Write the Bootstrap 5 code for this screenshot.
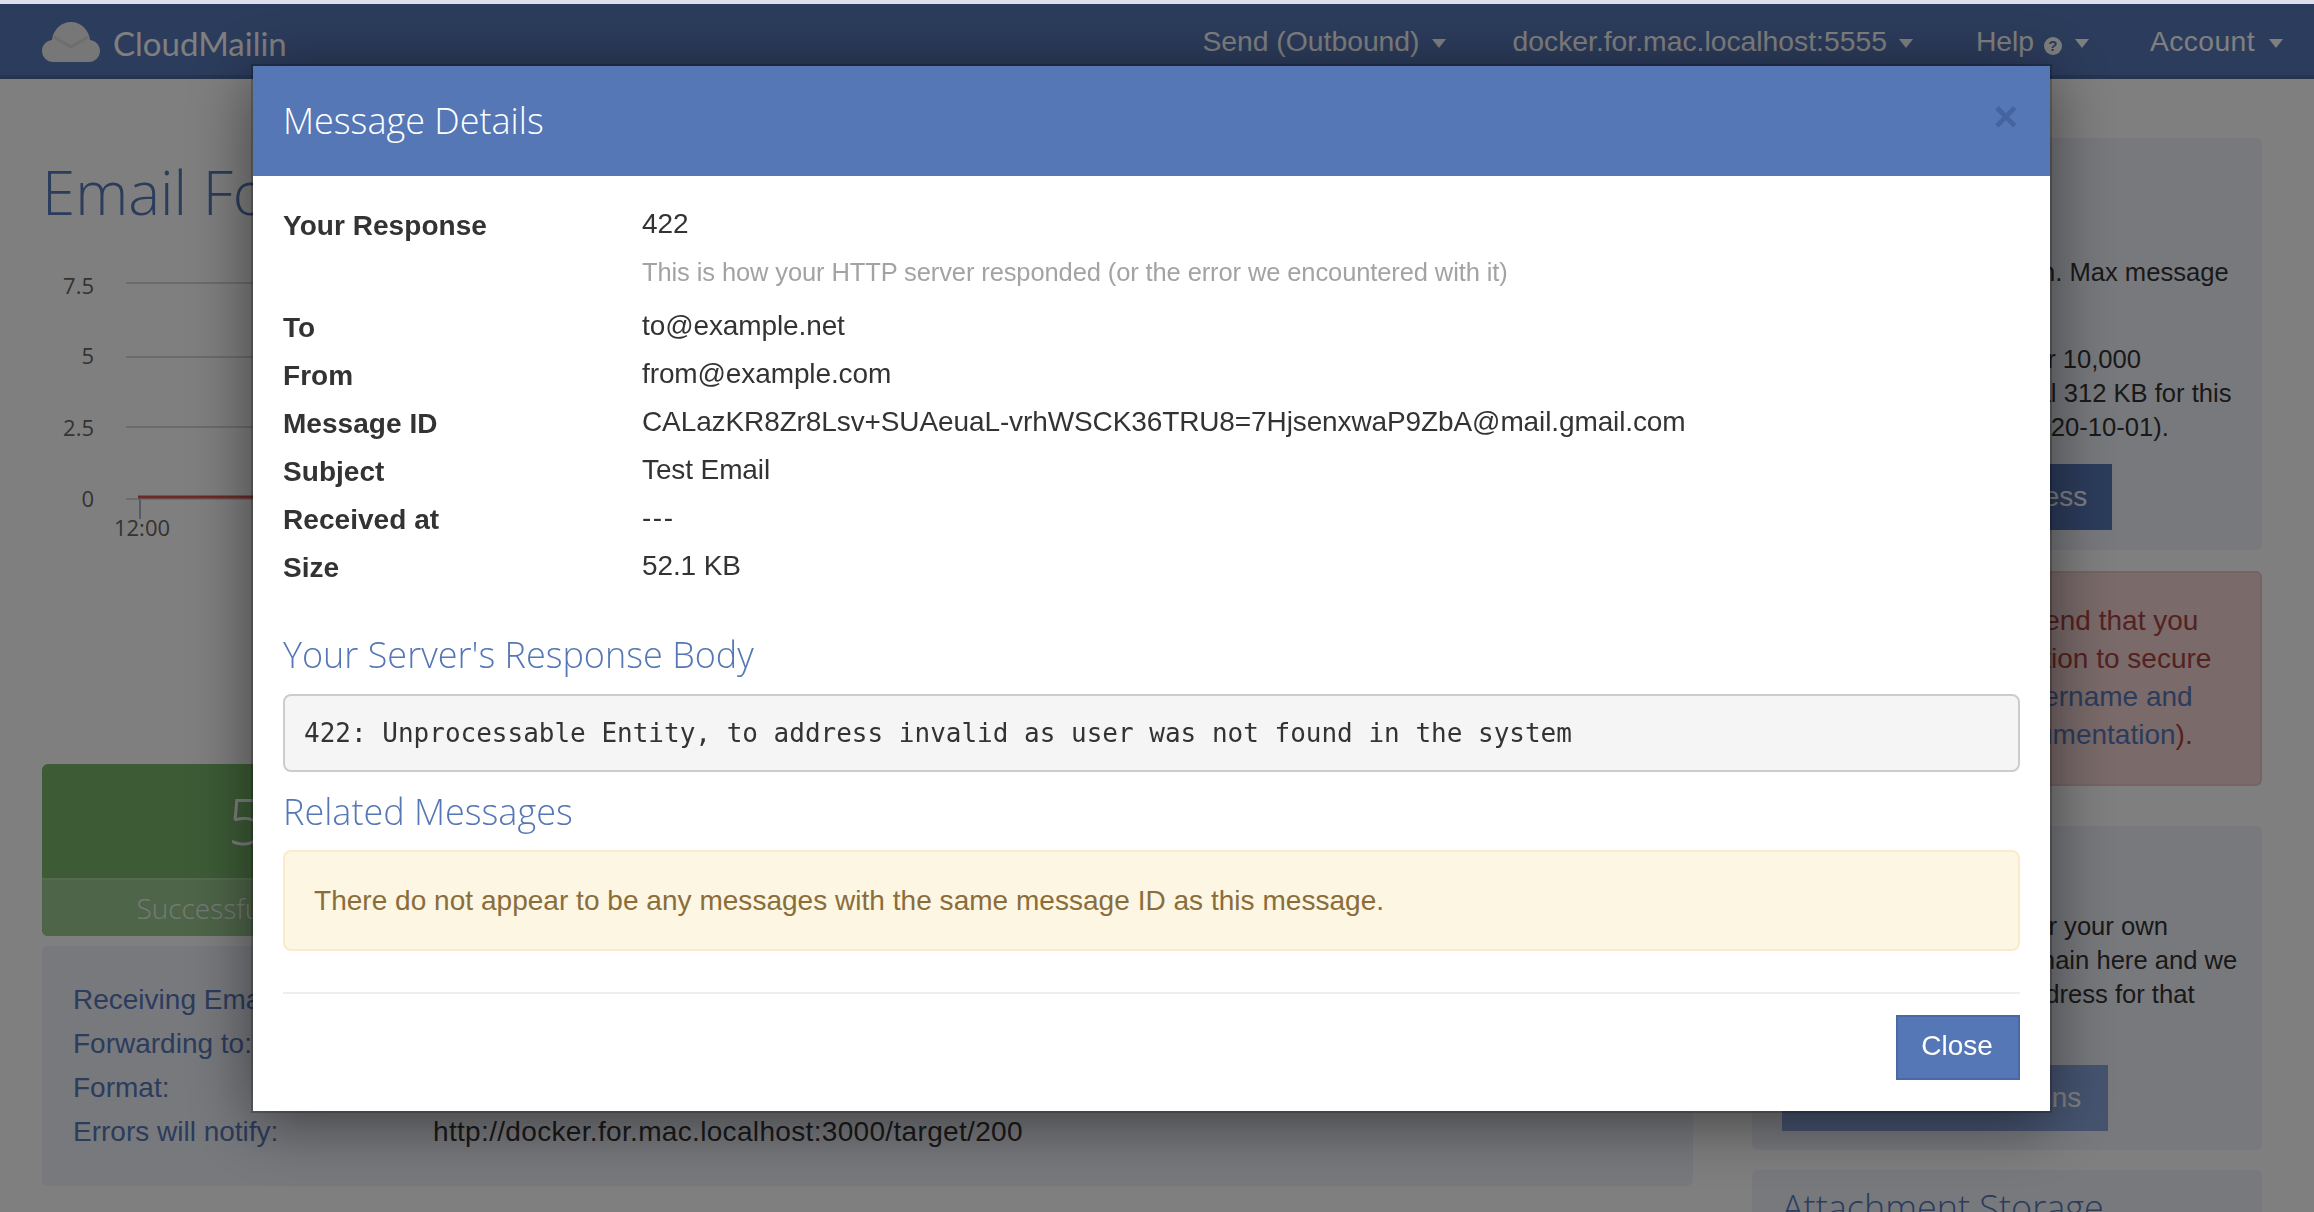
<!DOCTYPE html>
<html lang="en">
<head>
  <meta charset="UTF-8" />
  <title>CloudMailin</title>
  <link href="https://cdn.jsdelivr.net/npm/bootstrap@5.3.0/dist/css/bootstrap.min.css" rel="stylesheet" />
  <style>
    html, body { height: 100%; overflow: hidden; }
    body { font-family: "Liberation Sans", Arial, sans-serif; font-size: 28px; color: #333; background: #fff; }
    .top-strip { height: 4px; background: #dde0e8; position: relative; z-index: 1060; }
    .cm-nav { background: #5878b8; border-bottom: 4px solid #4c68a0; height: 75px; padding: 0; }
    .cm-nav .navbar-brand { font-family: Lato, sans-serif; font-size: 33px; color: #fff; padding: 5px 0 0 42px; margin: 0; line-height: 1; gap: 13px; }
    .brand-word { margin-top: 2px; }
    .cm-nav .navbar-nav .nav-link { color: #fff; font-size: 28.3px; padding: 4px 31px 0 30px; }
    .cm-nav .dropdown-toggle::after { border-top-width: 9px; border-left-width: 7px; border-right-width: 7px; border-bottom: 0; margin-left: 12px; vertical-align: 3px; }
    .nav-first { margin-right: 6px; }
    .nav-second { margin-right: 2px; }
    .nav-last .nav-link { letter-spacing: .4px; }
    .cm-nav .nav-last .dropdown-toggle::after { margin-left: 14px; }
    .nav-help { display: inline-block; width: 18px; height: 18px; line-height: 18px; background: #fff; color: #5878b8; border-radius: 50%; font-size: 15px; font-weight: 700; text-align: center; vertical-align: 0; margin: 0 1px 0 2px; }
    .cm-page { padding: 0 52px 0 42px; gap: 59px; }
    .cm-left { width: 1651px; flex: none; }
    .cm-right { width: 510px; flex: none; }
    .cm-title { font-family: "Open Sans", sans-serif; font-weight: 300; font-size: 60px; line-height: 66px; color: #5878b8; margin: 80px 0 0; white-space: nowrap; }
    .cm-chart { display: block; width: 1651px; height: 539px; }
    .cm-chart text { font-family: "Open Sans", sans-serif; font-size: 22px; fill: #666; }
    .stat-panel { width: 408px; height: 172px; background: #7ab86c; border-radius: 6px; overflow: hidden; color: #fff; text-align: center; }
    .stat-num { height: 114px; font-family: "Open Sans", sans-serif; font-weight: 300; font-size: 64px; line-height: 114px; }
    .stat-foot { height: 58px; line-height: 56px; background: #9cca92; border-top: 2px solid #a9d69e; white-space: nowrap; font-family: "Open Sans", sans-serif; font-weight: 300; color: rgba(255,255,255,.85); }
    .info-well { background: #f0f2fa; border-radius: 6px; padding: 32px 31px; height: 240px; margin-top: 10px; }
    .info-row { height: 44px; line-height: 44px; }
    .info-key { width: 360px; color: #5878b8; flex: none; }
    .info-val { letter-spacing: .33px; }
    .side-well { background: #f0f2fa; border-radius: 6px; padding: 30px; font-size: 25.6px; line-height: 34px; }
    .side-well h4 { font-family: "Open Sans", sans-serif; font-weight: 300; font-size: 36px; line-height: 40px; color: #5878b8; margin: 0; white-space: nowrap; }
    .side-well p { margin: 0; white-space: nowrap; }
    .side-red { background: #f4d4d4; border: 2px solid #ecc8c8; color: #a94442; font-size: 28px; line-height: 38px; padding: 29px 28px 30px 34px; border-radius: 6px; white-space: nowrap; margin-top: 21px; }
    .side-red a { color: #5878b8; text-decoration: none; }
    .side-btn { background: #5878b8; color: #fff; font-size: 28px; line-height: 66px; height: 66px; padding: 0 25px; border: 0; border-radius: 0; margin-top: 20px; }
    .well-one { height: 412px; margin-top: 59px; }
    .well-one .para-a { margin-top: 47px; }
    .well-one .para-b { margin-top: 19px; }
    .well-three { height: 324px; margin-top: 40px; }
    .well-three .para-a { margin-top: 13px; }
    .well-three .side-btn { background: #8ca8e0; padding: 0 27px; }
    .well-four { height: 200px; margin-top: 20px; padding-top: 18px; }
    .msg-dialog { max-width: 1797px; width: 1797px; margin: 66px 0 0 253px; }
    .msg-content { border: 0; border-radius: 0; box-shadow: 0 0 0 2px rgba(0,0,0,.2), 0 10px 60px rgba(0,0,0,.5); }
    .msg-head { background: #5577b5; color: #fff; height: 110px; padding: 0 30px; border: 0; border-radius: 0; }
    .msg-head h5 { font-family: "Open Sans", sans-serif; font-weight: 300; font-size: 36px; margin: 0; }
    .msg-x { background: none; border: 0; padding: 0; color: #45649f; font-weight: 700; font-size: 42px; line-height: 1; margin: -8px 2px 0 auto; }
    .msg-body { padding: 24px 30px 0; }
    .msg-row { height: 48px; line-height: 48px; letter-spacing: -.11px; }
    .msg-row-help { height: 54px; }
    .msg-label { width: 359px; flex: none; font-weight: 700; color: #333; line-height: 51px; letter-spacing: .05px; }
    .msg-help { font-size: 25.5px; color: #a3a3a3; }
    .msg-dashes { letter-spacing: 1.5px; }
    .msg-h { font-family: "Open Sans", sans-serif; font-weight: 300; font-size: 36px; line-height: 40px; color: #5577b5; margin: 20px 0 18px; }
    .msg-h-first { margin-top: 45px; margin-bottom: 19px; }
    .msg-pre { font-family: "DejaVu Sans Mono", monospace; font-size: 26px; line-height: 37px; color: #333; background: #f5f5f5; border: 2px solid #ccc; border-radius: 8px; padding: 19px; margin: 0; height: 78px; overflow: hidden; }
    .msg-alert { background: #fcf6e3; border: 2px solid #faebcc; color: #8a6d3b; border-radius: 8px; padding: 29px; line-height: 40px; height: 101px; margin: 0; letter-spacing: .03px; }
    .msg-rule { border-top: 2px solid #eee; margin: 41px 0 21px; }
    .msg-close { background: #5577b5; border: 2px solid #4a69a3; color: #fff; font-size: 28px; line-height: 56px; width: 124px; height: 65px; border-radius: 0; padding: 0 2px 3px 0; }
    .msg-foot { padding-bottom: 31px; }
  </style>
</head>
<body>
  <div class="top-strip"></div>

  <nav class="navbar navbar-expand cm-nav">
    <a class="navbar-brand d-flex align-items-center" href="#">
      <svg width="58" height="40" viewBox="0 0 58 40">
        <path d="M11 40C5 40 0 35 0 29c0-6 4-10 10-11C11 8 19 0 29 0s18 8 19 18c6 1 10 5 10 11 0 6-5 11-11 11z" fill="#eeeeee" />
        <path d="M12 15l17 10 17-10" fill="none" stroke="#dddddd" stroke-width="3" />
      </svg>
      <span class="brand-word">CloudMailin</span>
    </a>
    <ul class="navbar-nav ms-auto">
      <li class="nav-item dropdown nav-first"><a class="nav-link dropdown-toggle" href="#">Send (Outbound)</a></li>
      <li class="nav-item dropdown nav-second"><a class="nav-link dropdown-toggle" href="#">docker.for.mac.localhost:5555</a></li>
      <li class="nav-item dropdown"><a class="nav-link dropdown-toggle" href="#">Help <span class="nav-help">?</span></a></li>
      <li class="nav-item dropdown nav-last"><a class="nav-link dropdown-toggle" href="#">Account</a></li>
    </ul>
  </nav>

  <div class="d-flex cm-page">
    <div class="cm-left">
      <h1 class="cm-title">Email Forwarding</h1>
      <svg class="cm-chart" viewBox="0 0 1651 539">
        <g stroke="#d8d8d8" stroke-width="2">
          <line x1="84" y1="58" x2="1651" y2="58" />
          <line x1="84" y1="132" x2="1651" y2="132" />
          <line x1="84" y1="202" x2="1651" y2="202" />
          <line x1="84" y1="274" x2="1651" y2="274" />
          <line x1="98" y1="274" x2="98" y2="294" stroke="#aab4d0" />
        </g>
        <line x1="96" y1="272" x2="1651" y2="272" stroke="#d9534f" stroke-width="3" />
        <text x="52" y="69" text-anchor="end">7.5</text>
        <text x="52" y="139" text-anchor="end">5</text>
        <text x="52" y="211" text-anchor="end">2.5</text>
        <text x="52" y="282" text-anchor="end">0</text>
        <text x="100" y="311" text-anchor="middle">12:00</text>
      </svg>
      <div class="stat-panel">
        <div class="stat-num">5</div>
        <div class="stat-foot">Successful Emails</div>
      </div>
      <div class="info-well">
        <div class="d-flex info-row"><div class="info-key">Receiving Email at:</div><div>test@cloudmailin.net</div></div>
        <div class="d-flex info-row"><div class="info-key">Forwarding to:</div><div>http://docker.for.mac.localhost:3000/target/200</div></div>
        <div class="d-flex info-row"><div class="info-key">Format:</div><div>JSON</div></div>
        <div class="d-flex info-row"><div class="info-key">Errors will notify:</div><div class="info-val">http://docker.for.mac.localhost:3000/target/200</div></div>
      </div>
    </div>

    <div class="cm-right">
      <div class="side-well well-one">
        <h4>Limits</h4>
        <p class="para-a">Inbound mail on domain. Max message<br>size is 30 MB.</p>
        <p class="para-b">Your usage is just under 10,000<br>messages, with the total 312 KB for this<br>current period (since 2020-10-01).</p>
        <button class="btn side-btn">Upgrade Your Address</button>
      </div>
      <div class="side-red">
        We strongly recommend that you<br>use basic authentication to secure<br>your main server (<a href="#">username and<br>password setup documentation</a>).
      </div>
      <div class="side-well well-three">
        <h4>Domains</h4>
        <p class="para-a">Want to receive mail, for your own<br>domain: Enter your domain here and we<br>will then create your address for that<br>domain.</p>
        <button class="btn side-btn">Add Custom Domains</button>
      </div>
      <div class="side-well well-four">
        <h4>Attachment Storage</h4>
      </div>
    </div>
  </div>

  <div class="modal-backdrop show"></div>

  <div class="modal d-block">
    <div class="modal-dialog msg-dialog">
      <div class="modal-content msg-content">
        <div class="modal-header msg-head">
          <h5 class="modal-title">Message Details</h5>
          <button class="msg-x" type="button">&times;</button>
        </div>
        <div class="modal-body msg-body">
          <div class="d-flex msg-row"><div class="msg-label">Your Response</div><div>422</div></div>
          <div class="d-flex msg-row msg-row-help"><div class="msg-label"></div><div class="msg-help">This is how your HTTP server responded (or the error we encountered with it)</div></div>
          <div class="d-flex msg-row"><div class="msg-label">To</div><div>to@example.net</div></div>
          <div class="d-flex msg-row"><div class="msg-label">From</div><div>from@example.com</div></div>
          <div class="d-flex msg-row"><div class="msg-label">Message ID</div><div>CALazKR8Zr8Lsv+SUAeuaL-vrhWSCK36TRU8=7HjsenxwaP9ZbA@mail.gmail.com</div></div>
          <div class="d-flex msg-row"><div class="msg-label">Subject</div><div>Test Email</div></div>
          <div class="d-flex msg-row"><div class="msg-label">Received at</div><div class="msg-dashes">---</div></div>
          <div class="d-flex msg-row"><div class="msg-label">Size</div><div>52.1 KB</div></div>
          <h4 class="msg-h msg-h-first">Your Server's Response Body</h4>
          <pre class="msg-pre">422: Unprocessable Entity, to address invalid as user was not found in the system</pre>
          <h4 class="msg-h">Related Messages</h4>
          <div class="alert msg-alert">There do not appear to be any messages with the same message ID as this message.</div>
          <div class="msg-rule"></div>
          <div class="d-flex justify-content-end msg-foot">
            <button class="btn msg-close" type="button">Close</button>
          </div>
        </div>
      </div>
    </div>
  </div>

  <script src="https://cdn.jsdelivr.net/npm/bootstrap@5.3.0/dist/js/bootstrap.bundle.min.js"></script>
</body>
</html>
